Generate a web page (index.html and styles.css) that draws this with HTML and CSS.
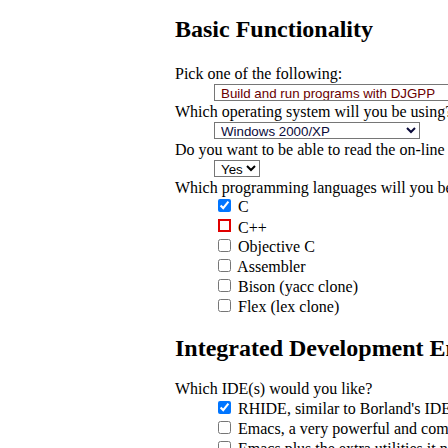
FILE: index.html
```html
<!DOCTYPE html>
<html>
<head>
<meta charset="utf-8">
<link rel="stylesheet" href="styles.css">
</head>
<body>
<div class="page">
  <h2 class="title title-first">Basic Functionality</h2>
  <dl class="qs">
    <dt>Pick one of the following:</dt>
    <dd class="sel-row"><select class="sel sel-goal"><option>Build and run programs with DJGPP</option></select></dd>
    <dt>Which operating system will you be using?</dt>
    <dd class="sel-row"><select class="sel sel-os"><option>Windows 2000/XP</option></select></dd>
    <dt>Do you want to be able to read the on-line documentation?</dt>
    <dd class="sel-row"><select class="sel sel-yes"><option>Yes</option></select></dd>
    <dt>Which programming languages will you be using?</dt>
    <dd class="opts">
      <div class="opt"><input type="checkbox" checked> C</div>
      <div class="opt"><input type="checkbox" class="bad"> C++</div>
      <div class="opt"><input type="checkbox"> Objective C</div>
      <div class="opt"><input type="checkbox"> Assembler</div>
      <div class="opt"><input type="checkbox"> Bison (yacc clone)</div>
      <div class="opt"><input type="checkbox"> Flex (lex clone)</div>
    </dd>
  </dl>
  <h2 class="title title-next">Integrated Development Environments</h2>
  <dl class="qs">
    <dt>Which IDE(s) would you like?</dt>
    <dd class="opts opts-ide">
      <div class="opt"><input type="checkbox" checked> RHIDE, similar to Borland's IDE, including a built-in editor and debugger.</div>
      <div class="opt"><input type="checkbox"> Emacs, a very powerful and complex editor that can be used as an IDE.</div>
      <div class="opt"><input type="checkbox"> Emacs plus the extra utilities it needs.</div>
    </dd>
  </dl>
</div>
</body>
</html>
```
FILE: styles.css
```css
html { overflow: hidden; }
body {
  margin: 0;
  font-family: "Liberation Serif", "Times New Roman", serif;
  font-size: 16px;
  color: #000;
  background: #fff;
}
.page {
  padding: 0 0 0 175px;
  width: 600px;
}
.title {
  font-size: 24px;
  font-weight: bold;
  white-space: nowrap;
}
.title-first { margin: 16px 0 22px; }
.title-next { margin: 0 0 18px; }
.qs {
  margin: 0 0 18px;
}
.qs dt { white-space: nowrap; }
.qs dd {
  margin: 0 0 0 39px;
  white-space: nowrap;
}
.sel-row {
  height: 19px;
}
.sel {
  display: block;
  height: 17px;
  margin-top: 1px;
  padding: 0 0 0 2px;
  font-family: "Liberation Sans", Arial, sans-serif;
  font-size: 13.33px;
  border: 1px solid #767676;
  border-radius: 0;
  background: #fff;
}
.sel-goal { color: #6a0000; width: 300px; }
.sel-os { color: #0a0a3a; width: 206px; }
.sel-yes { color: #000; width: 46px; }
.opts-ide { padding-top: 1px; }
.opt { height: 20px; }
.opt input { margin: 2px 3px 3px 4px; }
.bad {
  appearance: none;
  -webkit-appearance: none;
  width: 13px;
  height: 13px;
  border: 2px solid #e00000;
  background: #fff;
  box-sizing: border-box;
  vertical-align: -2px;
}
```
